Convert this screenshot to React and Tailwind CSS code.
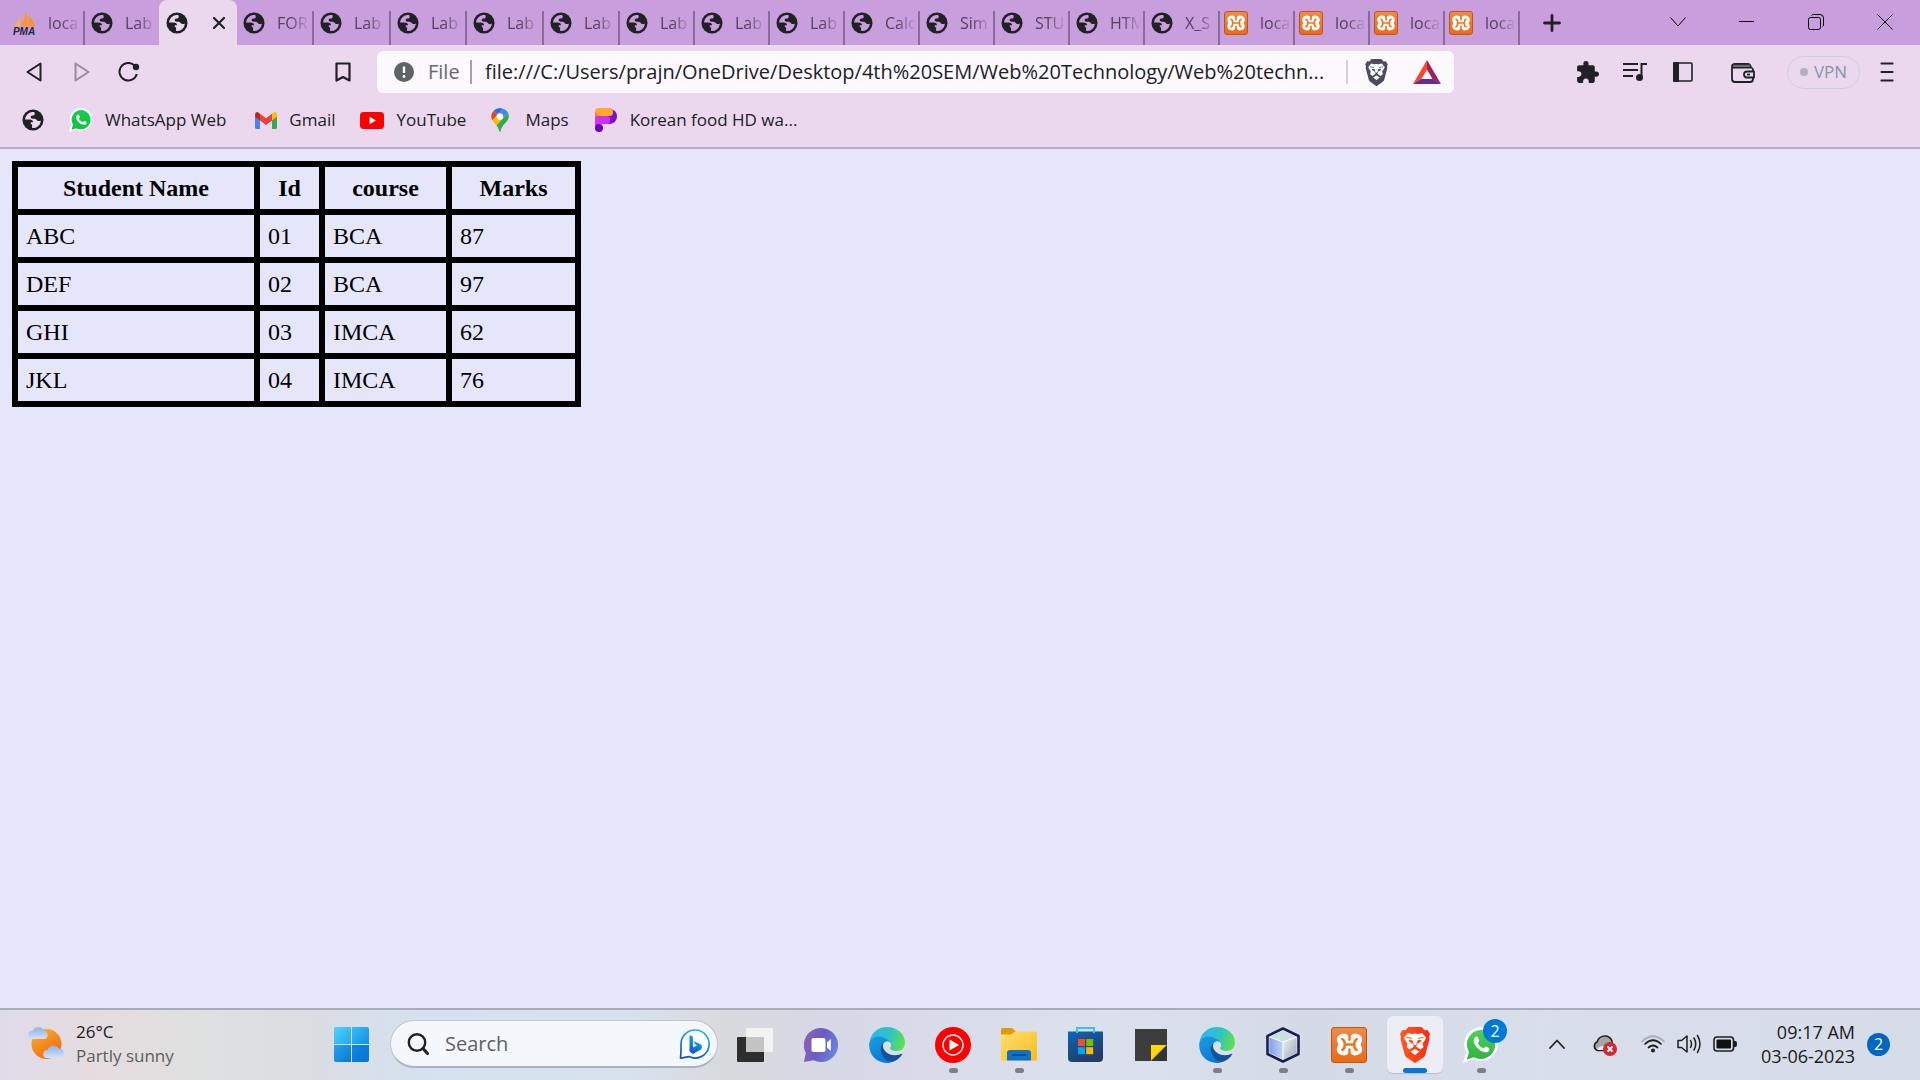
import React from "react";
import { MdExtension } from "react-icons/md";

const UI = "font-['Open_Sans','Noto_Sans',sans-serif]";

function Globe({ className, land = "#ebd8ef" }) {
  return (
    <svg viewBox="0 0 24 24" className={className} aria-hidden="true">
      <circle cx="12" cy="12" r="11.5" fill="#202124" />
      <path
        fill={land}
        d="M11 3.3A8.8 8.8 0 0 0 3.3 11.4H8.2C10.8 11.4 12 12.6 12 14.4H9.6V16.6H11V20.7A8.8 8.8 0 0 0 20.7 12.6C19.5 13.4 17.4 13.6 16.3 12.2C15.4 11 14.4 10.4 12.4 10.6C10.3 10.8 9 9.6 9.6 8C10 7 11.4 7 12.6 7C14 7 14.2 5 13.4 3.3Z"
      />
    </svg>
  );
}

function Pma({ className }) {
  return (
    <svg viewBox="0 0 24 24" className={className} aria-hidden="true">
      <path d="M2 15.5C5 12 6.8 8 7 4C8.2 8 8.2 12 7.6 15.5Z" fill="#f9b04a" />
      <path d="M8.4 15.5C11 11 13.3 6 13.5 0C15.8 6 16.3 11 15.5 15.5Z" fill="#fb9a1e" />
      <path d="M16.4 15.5C17 11 17.2 8 16.8 3.5C19.5 7 22 11 23 15.5Z" fill="#f8922a" />
      <text x="12" y="23.5" textAnchor="middle" fontSize="10" fontWeight="900" fontStyle="italic" fontFamily="Liberation Sans, sans-serif" fill="#1d2747">PMA</text>
    </svg>
  );
}

function Xampp({ className, inner }) {
  return (
    <span className={`${className} flex items-center justify-center rounded-[3px] border border-[#b25a1c] bg-linear-to-b from-[#f08a43] to-[#ec6a12]`}>
      <svg viewBox="0 0 24 24" className={inner} aria-hidden="true">
        <path
          d="M7.5 3C3.8 3 1.5 5 1.5 8C1.5 10 2.7 10.8 2.7 12C2.7 13.2 1.5 14 1.5 16C1.5 19 3.8 21 7.5 21C10.2 21 10.8 19 12 19C13.2 19 13.8 21 16.5 21C20.2 21 22.5 19 22.5 16C22.5 14 21.3 13.2 21.3 12C21.3 10.8 22.5 10 22.5 8C22.5 5 20.2 3 16.5 3C13.8 3 13.2 5 12 5C10.8 5 10.2 3 7.5 3Z"
          fill="#fff"
        />
        <path
          d="M6 7.5Q8.3 8.5 8 12Q8.3 15.500 6 16.500M18 7.500Q15.700 8.500 16 12Q15.700 15.500 18 16.500M8 12H16M12 4.500V8M12 16V19.500"
          fill="none"
          stroke="#ee7420"
          strokeWidth="2"
          strokeLinecap="round"
          strokeLinejoin="round"
        />
      </svg>
    </span>
  );
}

function WhatsApp({ className, from, to }) {
  return (
    <svg viewBox="0 0 36 36" className={className} aria-hidden="true">
      <path d="M18.5 0A17 17 0 1 1 10.5 32.2L0 36L3.3 25A17 17 0 0 1 18.5 0Z" fill="#fff" />
      <defs>
        <linearGradient id={`wa${from}`} x1="0" y1="0" x2="0" y2="1">
          <stop offset="0" stopColor={`#${from}`} />
          <stop offset="1" stopColor={`#${to}`} />
        </linearGradient>
      </defs>
      <path d="M18.5 3A14.5 14.5 0 1 1 11 30.3L3.8 32.5L6 25A14.5 14.5 0 0 1 18.5 3Z" fill={`url(#wa${from})`} />
      <path d="M13.5 9.6C14.3 9.5 14.7 9.9 15 10.6L16.2 13.5C16.4 14.3 15.2 15.2 14.7 15.9C16 18.4 18 20.2 20.6 21.3C21.5 20.6 22.2 19.2 23 19.6L26 21.1C26.8 21.6 26.5 23 25.8 23.9C24.5 25.4 22.3 25.6 20.5 24.9C16 23.3 12.7 20 11 16C10.2 13.6 11 10.3 13.5 9.6Z" fill="#fff" />
    </svg>
  );
}

function Edge({ className, id }) {
  return (
    <svg viewBox="0 0 36 36" className={className} aria-hidden="true">
      <defs>
        <linearGradient id={`${id}a`} x1="0" y1="0.3" x2="1" y2="0.5">
          <stop offset="0" stopColor="#2fb6ee" />
          <stop offset="0.55" stopColor="#2fc3c4" />
          <stop offset="1" stopColor="#5fe04a" />
        </linearGradient>
        <linearGradient id={`${id}b`} x1="0" y1="0" x2="0.5" y2="1">
          <stop offset="0" stopColor="#1b9de2" />
          <stop offset="1" stopColor="#0a78d4" />
        </linearGradient>
      </defs>
      <path d="M0.5 15C2 6 9 0 18 0C28 0 36 7 36 15.5C36 20.5 32.5 24 27.5 24C23.5 24 20.500 22.700 21 21C22.500 19.500 22.400 17.500 21.300 16C18 10.500 6 8 0.500 15Z" fill={`url(#${id}a)`} />
      <path d="M0.3 16C3 9 10 8.5 14.5 10.5C18 12 20.8 14 21.5 16C18 12.5 13 15 13 21C13 28 19 34 25 34C22.5 35.6 20 36 18 36C7 36 -1 27 0.3 16Z" fill={`url(#${id}b)`} />
      <path d="M15 15C12 18 11 22 12.5 26C15 32 20 35.5 24.5 34.6C28.5 33.3 31.5 30.5 33.3 27.3C33.5 26.5 32.8 26.2 32 26.6C25 30 15 27 14 19.5C13.8 18 14.2 16.4 15 15Z" fill="#12519b" />
      <path d="M14.3 18.5C14.5 16 17 14.2 19.300 14.500C22.300 15.200 22.600 18.500 21 20.500C20.500 22.800 24 24.300 28 24.200C30.500 24.200 32.500 23.500 33.500 22.500L33 26.500C29.500 28.300 25.500 28.600 22 27.600C17.500 26 14.500 22.500 14.300 18.500Z" fill="#dbdee9" />
    </svg>
  );
}

function Lion({ className, color }) {
  return (
    <svg viewBox="0 0 30 36" className={className} aria-hidden="true">
      <defs>
        <linearGradient id={`lion${color}`} x1="0" y1="0" x2="1" y2="0">
          <stop offset="0" stopColor={color === "orange" ? "#ff5a1f" : "#4b4d5c"} />
          <stop offset="1" stopColor={color === "orange" ? "#fb2b0d" : "#4b4d5c"} />
        </linearGradient>
      </defs>
      <path d="M8.5 0H21.5L24.5 3.2L27.5 3L30 7L29 10L29.5 12L25.5 27C25 29 24 30 22.5 31L16 35.5C15.3 36 14.7 36 14 35.5L7.5 31C6 30 5 29 4.5 27L0.5 12L1 10L0 7L2.5 3L5.5 3.2Z" fill={`url(#lion${color})`} />
      <path d="M15 6.5L18 7L22 6L26 10.5L25 13L22.5 16.5L23.5 20L20.5 22.5L17.5 20.5L16.2 19.5L17 17L20.5 15L21.5 13L17.5 13.3L17 15.500L16 18H14L13 15.500L12.500 13.300L8.500 13L9.500 15L13 17L13.800 19.500L12.500 20.500L9.500 22.500L6.500 20L7.500 16.500L5 13L4 10.500L8 6L12 7Z" fill="#fff" />
      <path d="M15 22L19.5 24.5L15 28L10.5 24.5Z" fill="#fff" />
      <path d="M6.5 10.500L12 11.300M23.500 10.500L18 11.300" stroke={color === "orange" ? "#fb4a1d" : "#4b4d5c"} strokeWidth="1" />
    </svg>
  );
}

const TABS = [
  { icon: "globe", text: "FOR", w: "w-[77px]" },
  { icon: "globe", text: "Lab", w: "w-[77px]" },
  { icon: "globe", text: "Lab", w: "w-[76px]" },
  { icon: "globe", text: "Lab", w: "w-[77px]" },
  { icon: "globe", text: "Lab", w: "w-[76px]" },
  { icon: "globe", text: "Lab", w: "w-[75px]" },
  { icon: "globe", text: "Lab", w: "w-[75px]" },
  { icon: "globe", text: "Lab", w: "w-[75px]" },
  { icon: "globe", text: "Calc", w: "w-[75px]" },
  { icon: "globe", text: "Sim", w: "w-[75px]" },
  { icon: "globe", text: "STU", w: "w-[75px]" },
  { icon: "globe", text: "HTM", w: "w-[75px]" },
  { icon: "globe", text: "X_S", w: "w-[75px]" },
  { icon: "xampp", text: "loca", w: "w-[75px]" },
  { icon: "xampp", text: "loca", w: "w-[75px]" },
  { icon: "xampp", text: "loca", w: "w-[75px]" },
  { icon: "xampp", text: "loca", w: "w-[75px]" },
];

function Tab({ icon, text, w, divider = true, first = false }) {
  return (
    <button className={`${w} flex h-full shrink-0 items-stretch pt-[11px]`}>
      <span className={`flex min-w-0 flex-1 items-center pb-2.5 pr-0.5 ${first ? "pl-3" : icon === "xampp" ? "pl-1" : "pl-1.5"}`}>
        {icon === "globe" && <Globe className="mr-3 size-[22px] shrink-0" land="#c89edc" />}
        {icon === "xampp" && <Xampp className="mr-3 size-6 shrink-0" inner="size-5" />}
        {icon === "pma" && <Pma className="mr-3 size-6 shrink-0" />}
        <span className="min-w-0 flex-1 overflow-hidden whitespace-nowrap text-left text-[16px] leading-6 text-[#54405f] [mask-image:linear-gradient(to_right,#000_40%,transparent)]">{text}</span>
      </span>
      {divider && <span className="w-0.5 bg-[#8a6a9b]" />}
    </button>
  );
}

const IconButton = ({ label, className, children }) => (
  <button aria-label={label} className={`flex shrink-0 items-center justify-center ${className}`}>
    {children}
  </button>
);

function TabStrip() {
  return (
    <div className="flex h-[45px] items-stretch bg-[#c89edc]">
      <Tab icon="pma" text="loca" w="w-[85px]" first />
      <Tab icon="globe" text="Lab" w="w-[74px]" divider={false} />
      <div className="flex w-[78px] shrink-0 items-center justify-between rounded-t-lg bg-[#ebd8ef] pl-[7px] pr-3">
        <Globe className="size-[22px]" />
        <button aria-label="Close tab">
          <svg viewBox="0 0 12 12" className="size-3" stroke="#202124" strokeWidth="2.2" strokeLinecap="round">
            <path d="M1 1L11 11M11 1L1 11" />
          </svg>
        </button>
      </div>
      {TABS.map((t, i) => (
        <Tab key={i} {...t} />
      ))}
      <IconButton label="New tab" className="ml-3.5 w-9">
        <svg viewBox="0 0 18 18" className="size-[18px]" stroke="#202124" strokeWidth="2.8" strokeLinecap="round">
          <path d="M9 1.5V16.5M1.5 9H16.5" />
        </svg>
      </IconButton>
      <div className="ml-auto flex pb-0.5">
        <IconButton label="Search tabs" className="w-[68px]">
          <svg viewBox="0 0 16 10" className="h-2.5 w-4" fill="none" stroke="#000" strokeWidth="1">
            <path d="M0.5 0.5L8 9L15.5 0.5" />
          </svg>
        </IconButton>
        <IconButton label="Minimise" className="w-[69px]">
          <span className="h-px w-[15px] bg-black" />
        </IconButton>
        <IconButton label="Restore" className="w-[69px]">
          <svg viewBox="0 0 16 16" className="size-4" fill="none" stroke="#000" strokeWidth="1">
            <rect x="0.5" y="3.5" width="12" height="12" rx="2" />
            <path d="M3.5 1.5Q4 0.5 5.5 0.5H12Q15.5 0.5 15.5 4V11Q15.5 12 14.5 12.5" />
          </svg>
        </IconButton>
        <IconButton label="Close" className="w-[70px]">
          <svg viewBox="0 0 16 16" className="size-4" stroke="#000" strokeWidth="1">
            <path d="M0.5 0.5L15.5 15.5M15.5 0.5L0.5 15.5" />
          </svg>
        </IconButton>
      </div>
    </div>
  );
}

function Toolbar() {
  return (
    <div className="flex h-[54px] items-center bg-[#ebd8ef] pr-[23px]">
      <IconButton label="Back" className="ml-6 w-5">
        <svg viewBox="0 0 16 20" className="h-5 w-4" fill="none" stroke="#202124" strokeWidth="2" strokeLinejoin="round">
          <path d="M14.5 1.5V18.5L1.5 10Z" />
        </svg>
      </IconButton>
      <IconButton label="Forward" className="ml-7 w-5">
        <svg viewBox="0 0 16 20" className="h-5 w-4" fill="none" stroke="#978a9f" strokeWidth="2" strokeLinejoin="round">
          <path d="M1.5 1.5V18.5L14.5 10Z" />
        </svg>
      </IconButton>
      <IconButton label="Reload" className="ml-[25px] w-6">
        <svg viewBox="0 0 22 20" className="h-5 w-[22px]" fill="none" stroke="#202124" strokeWidth="2">
          <path d="M16.5 3.5A8.8 8.8 0 1 0 18.8 12" />
          <circle cx="18" cy="5" r="3.2" fill="#202124" stroke="none" />
        </svg>
      </IconButton>
      <IconButton label="Bookmark this tab" className="ml-[190px] w-6">
        <svg viewBox="0 0 16 20" className="h-5 w-4" fill="none" stroke="#202124" strokeWidth="2.2" strokeLinejoin="round">
          <path d="M1.5 1.5H14.5V18.5L8 15L1.5 18.5Z" />
        </svg>
      </IconButton>
      <div className="ml-[22px] flex h-[42px] flex-1 items-center rounded-md bg-[#fcfafe] pl-[17px] pr-[13px]">
        <svg viewBox="0 0 20 20" className="size-5 shrink-0" aria-hidden="true">
          <circle cx="10" cy="10" r="10" fill="#5f6368" />
          <path d="M10 4.5V11" stroke="#fff" strokeWidth="2.4" />
          <circle cx="10" cy="14.5" r="1.4" fill="#fff" />
        </svg>
        <span className="ml-3.5 w-[42px] text-[20px] leading-7 text-[#6a6672]">File</span>
        <span className="h-6 w-0.5 bg-[#a5a1a9]" />
        <input
          aria-label="Address"
          readOnly
          value="file:///C:/Users/prajn/OneDrive/Desktop/4th%20SEM/Web%20Technology/Web%20techn..."
          className="ml-[13px] min-w-0 flex-1 bg-transparent text-[20px] leading-7 text-[#202124] outline-none"
        />
        <span className="h-6 w-0.5 bg-[#d3d1d8]" />
        <IconButton label="Brave Shields" className="ml-4 w-6">
          <Lion className="h-[27px] w-[23px]" color="grey" />
        </IconButton>
        <IconButton label="Brave Rewards" className="ml-[25px] w-7">
          <svg viewBox="0 0 28 24" className="h-6 w-7">
            <path d="M14 0L0 24L8.5 19L14 9.5Z" fill="#ff4724" />
            <path d="M14 0L28 24L19.5 19L14 9.5Z" fill="#9e1f63" />
            <path d="M0 24H28L20 19H8Z" fill="#662d91" />
          </svg>
        </IconButton>
      </div>
      <IconButton label="Extensions" className="ml-[119px] w-7">
        <MdExtension className="size-[25px] text-[#202124]" />
      </IconButton>
      <IconButton label="Media controls" className="ml-5 w-7">
        <svg viewBox="0 0 24 20" className="h-5 w-6" fill="none" stroke="#202124" strokeWidth="2">
          <path d="M0 2H15M0 8H15M0 14H10M18.5 15V2H24" />
          <circle cx="16.5" cy="15.5" r="3.5" fill="#202124" stroke="none" />
        </svg>
      </IconButton>
      <IconButton label="Sidebar" className="ml-5 w-7">
        <svg viewBox="0 0 20 20" className="size-5">
          <rect x="1" y="1" width="18" height="18" rx="1" fill="none" stroke="#202124" strokeWidth="1.6" />
          <rect x="0" y="0" width="6" height="20" rx="1" fill="#202124" />
        </svg>
      </IconButton>
      <IconButton label="Wallet" className="ml-8 w-7">
        <svg viewBox="0 0 24 20" className="mt-0.5 h-5 w-6" fill="none" stroke="#202124" strokeWidth="1.8" strokeLinejoin="round">
          <path d="M1 4V16Q1 19 4 19H19Q22 19 22 16V7Q22 5 20 4.5H2Q1 4 1 3Q1.500 1 4 1H17Q19 1 20 4.500" />
          <path d="M2 2.7H19" stroke="#6b6670" />
          <path d="M23 8.5H16Q13 8.5 13 11.5Q13 14.5 16 14.5H23Z" fill="#ebd8ef" />
          <path d="M16 11.5H19" />
        </svg>
      </IconButton>
      <button className="ml-[30px] flex h-[33px] w-[73px] shrink-0 items-center justify-center gap-1.5 rounded-full border border-[#cdd0d3] text-[17px] text-[#8a93a8]">
        <span className="size-2 rounded-full bg-[#adb2c3]" />
        VPN
      </button>
      <IconButton label="Menu" className="ml-[17px] w-5">
        <svg viewBox="0 0 14 20" className="h-5 w-3.5" stroke="#202124" strokeWidth="2.2" strokeLinecap="round">
          <path d="M1.5 1.5H12.5M1.5 10H12.5M1.5 18.5H12.5" />
        </svg>
      </IconButton>
    </div>
  );
}

const linkText = "text-[17px] leading-6 text-[#202124]";

function Bookmarks() {
  return (
    <nav className="flex h-[50px] items-center border-b-2 border-[#b9aac6] bg-[#ebd8ef] pb-1.5 pl-[22px]">
      <a href="#new" aria-label="Untitled bookmark">
        <Globe className="size-[22px]" />
      </a>
      <a href="#whatsapp" className={`ml-[25px] flex items-center gap-3 ${linkText}`}>
        <WhatsApp className="size-6" from="14cf4a" to="0fc143" />
        WhatsApp Web
      </a>
      <a href="#gmail" className={`ml-[29px] flex items-center gap-3 ${linkText}`}>
        <svg viewBox="0 0 22 17" className="h-[17px] w-[22px]" aria-hidden="true">
          <path d="M0 3V15.5Q0 17 1.5 17H5V7Z" fill="#4285f4" />
          <path d="M22 3V15.5Q22 17 20.5 17H17V7Z" fill="#34a853" />
          <path d="M5 8.5V1.8L11 6.3L17 1.8V8.5L11 13Z" fill="#ea4335" />
          <path d="M0 3Q0 0 2.5 0L5 1.8V8.5L0 4.7Z" fill="#c5221f" />
          <path d="M22 3Q22 0 19.5 0L17 1.8V8.5L22 4.7Z" fill="#fbbc04" />
        </svg>
        Gmail
      </a>
      <a href="#youtube" className={`ml-[25px] flex items-center gap-3 ${linkText}`}>
        <svg viewBox="0 0 24 17" className="h-[17px] w-6" aria-hidden="true">
          <rect width="24" height="17" rx="3.5" fill="#f00" />
          <path d="M9.6 4.8L16 8.5L9.6 12.2Z" fill="#fff" />
        </svg>
        YouTube
      </a>
      <a href="#maps" className={`ml-[25px] flex items-center gap-4 ${linkText}`}>
        <svg viewBox="0 0 18 24" className="h-6 w-[18px]" aria-hidden="true">
          <path d="M9 0A8.5 8.5 0 0 0 2.5 3L6.5 6.5L12 0.7Z" fill="#1a73e8" />
          <path d="M2.5 3A8.5 8.5 0 0 0 1.5 12.5L6.5 6.5Z" fill="#ea4335" />
          <path d="M12 0.7L6.5 6.5A3.3 3.3 0 0 1 11.5 10.5L17 4.5A8.5 8.5 0 0 0 12 0.7Z" fill="#4285f4" />
          <path d="M1.5 12.5L6.5 6.5A3.5 3.5 0 0 0 11.5 10.8L5.5 17.5Q3 15 1.5 12.5Z" fill="#fbbc04" />
          <path d="M17 4.5Q18.8 9 16.5 12.5C13 16.5 10.5 18.5 9.7 23Q9 24.7 8.3 23Q7.5 20 5.5 17.5Z" fill="#34a853" />
          <circle cx="9" cy="8.5" r="3.2" fill="#fff" />
        </svg>
        Maps
      </a>
      <a href="#wallpaper" className={`ml-[25px] flex items-center gap-3 ${linkText}`}>
        <svg viewBox="0 0 24 24" className="size-6" aria-hidden="true">
          <path d="M15 1C21 1 23 5 23 8.5C23 13 19.5 16 15 16H10V8Z" fill="#7b10cf" />
          <rect x="1" y="0" width="18" height="8" rx="3.5" fill="#ffa92e" />
          <path d="M1 4V12H6V8Z" fill="#ff7a45" />
          <rect x="1" y="8" width="15" height="8" rx="3" fill="#cf2ff0" />
          <path d="M1 11V19H6V15Z" fill="#d836e8" />
          <circle cx="5" cy="20" r="4" fill="#6a00c8" />
        </svg>
        Korean food HD wa...
      </a>
    </nav>
  );
}

const ROWS = [
  ["ABC", "01", "BCA", "87"],
  ["DEF", "02", "BCA", "97"],
  ["GHI", "03", "IMCA", "62"],
  ["JKL", "04", "IMCA", "76"],
];
const cell = "h-12 border-[6px] border-black px-2 py-0";

function Page() {
  return (
    <main className="min-h-0 flex-1 bg-[#e5e6fa] p-3 font-['Liberation_Serif','Times_New_Roman',serif] text-2xl leading-7 text-black">
      <table className="border-collapse border-[6px] border-black">
        <thead>
          <tr>
            <th className={`${cell} w-[242px]`}>Student Name</th>
            <th className={`${cell} w-[65px]`}>Id</th>
            <th className={`${cell} w-[127px]`}>course</th>
            <th className={`${cell} w-[129px]`}>Marks</th>
          </tr>
        </thead>
        <tbody>
          {ROWS.map((r) => (
            <tr key={r[0]}>
              {r.map((c) => (
                <td key={c} className={cell}>{c}</td>
              ))}
            </tr>
          ))}
        </tbody>
      </table>
    </main>
  );
}

function TaskButton({ label, running, active, children }) {
  return (
    <button aria-label={label} className="flex w-[66px] shrink-0 items-center justify-center">
      <span className={`relative flex h-[57px] w-14 items-center justify-center rounded-md ${active ? "bg-[#ecedf5] shadow-[0_1px_1px_#b9bfcd]" : ""}`}>
        {children}
        {running && <span className="absolute bottom-0 h-[5px] w-[9px] rounded-full bg-[#7d7f86]" />}
        {active && <span className="absolute bottom-0 h-[5px] w-6 rounded-full bg-[#0078d7]" />}
      </span>
    </button>
  );
}

function Taskbar() {
  return (
    <footer className="flex h-[72px] shrink-0 items-stretch border-t-2 border-[#a9adba] bg-[linear-gradient(90deg,#dedbe9_0%,#e6dcdf_5%,#dfe0e0_10%,#dadde2_16%,#d5e1ee_22%,#d7e2ee_32%,#d9dade_38%,#d8d8e5_42%,#d9dce9_50%,#dbe2ee_58%,#d4dbe7_68%,#d8deea_80%,#d6dce8_100%)] pr-[30px]">
      <button className="flex w-[325px] items-center pl-7 text-left">
        <svg viewBox="0 0 37 34" className="mb-1 h-[34px] w-[37px]" aria-hidden="true">
          <defs>
            <linearGradient id="sun" x1="0" y1="0" x2="0.6" y2="1">
              <stop offset="0" stopColor="#f6b52e" />
              <stop offset="1" stopColor="#f36a10" />
            </linearGradient>
            <linearGradient id="cloud" x1="0" y1="0" x2="0" y2="1">
              <stop offset="0" stopColor="#8fb0ea" />
              <stop offset="1" stopColor="#d3e2f8" />
            </linearGradient>
          </defs>
          <circle cx="18.5" cy="18" r="15" fill="url(#sun)" />
          <path d="M4 13A4 4 0 0 1 4.5 5A6.5 6.5 0 0 1 16 4.5A4.5 4.5 0 0 1 17 13Z" fill="url(#cloud)" />
          <path d="M19 32A4 4 0 0 1 19.5 24A6.5 6.5 0 0 1 31 22.5A4.8 4.8 0 0 1 32 32Z" fill="url(#cloud)" />
        </svg>
        <span className="ml-[11px] pb-0.5 text-[17px] leading-6">
          <span className="block text-[#1b1b1b]">26°C</span>
          <span className="block text-[#5c5c5f]">Partly sunny</span>
        </span>
      </button>
      <IconButton label="Start" className="w-[52px]">
        <span className="mb-0.5 grid size-[35px] grid-cols-2 gap-px">
          <span className="rounded-tl-xs bg-linear-to-br from-[#4fd2ff] to-[#22a8ec]" />
          <span className="rounded-tr-xs bg-linear-to-br from-[#36bdf6] to-[#1290de]" />
          <span className="rounded-bl-xs bg-linear-to-br from-[#25a5ea] to-[#0a78d4]" />
          <span className="rounded-br-xs bg-linear-to-br from-[#1189dc] to-[#0573d2]" />
        </span>
      </IconButton>
      <label className="my-[10px] ml-[13px] flex h-[48px] w-[328px] items-center self-start rounded-full border border-b-2 border-[#bcc6d4] border-b-[#aab4c0] bg-[#f4f7fb] pl-4 pr-[7px]">
        <svg viewBox="0 0 22 22" className="size-[22px] shrink-0" fill="none" stroke="#222" strokeWidth="2.4" strokeLinecap="round">
          <circle cx="10" cy="9.5" r="8.2" />
          <path d="M16 15.5L20.5 20.5" strokeWidth="3" />
        </svg>
        <input aria-label="Search" placeholder="Search" className="ml-4 min-w-0 flex-1 bg-transparent text-[20px] leading-7 outline-none placeholder:text-[#5f6064]" />
        <svg viewBox="0 0 32 32" className="size-8 shrink-0" aria-hidden="true">
          <defs>
            <linearGradient id="bing" x1="0.7" y1="0" x2="0.3" y2="1">
              <stop offset="0" stopColor="#18b9ef" />
              <stop offset="1" stopColor="#1453d0" />
            </linearGradient>
          </defs>
          <path d="M17 2A14 14 0 1 1 11 28.6L2.5 30.2L3 23L3 16A14 14 0 0 1 17 2Z" fill="#fff" stroke="url(#bing)" strokeWidth="1.7" strokeLinejoin="round" />
          <path d="M11.5 7L15 8.5V19.5L19 17.3L17 16.3L15.5 13L23 16.5Q25 19 23 21.5L15 26L11.5 23.5Z" fill="url(#bing)" />
        </svg>
      </label>
      <div className="ml-1 mt-1.5 flex items-start">
        <TaskButton label="Task view">
          <svg viewBox="0 0 36 34" className="h-[34px] w-9">
            <rect x="0" y="9" width="27" height="25" rx="1" fill="#2e2e2e" />
            <rect x="9" y="0" width="27" height="24" rx="1" fill="#f3f3f3" />
            <rect x="9" y="9" width="18" height="15" fill="#c4c4c4" />
          </svg>
        </TaskButton>
        <TaskButton label="Chat">
          <svg viewBox="0 0 34 34" className="size-[34px]">
            <defs>
              <linearGradient id="chat" x1="0" y1="0.2" x2="1" y2="0.6">
                <stop offset="0" stopColor="#8f62ad" />
                <stop offset="0.5" stopColor="#6a5cc6" />
                <stop offset="1" stopColor="#6a83e2" />
              </linearGradient>
            </defs>
            <path d="M17 0A17 17 0 1 1 9.5 32.2L0 34L1.8 25A17 17 0 0 1 17 0Z" fill="url(#chat)" />
            <rect x="7.5" y="10" width="14" height="14" rx="2" fill="#fff" />
            <path d="M23 14.5L26.8 11V23L23 19.5Z" fill="#fff" />
          </svg>
        </TaskButton>
        <TaskButton label="Edge">
          <Edge id="e1" className="size-9" />
        </TaskButton>
        <TaskButton label="YouTube Music" running>
          <svg viewBox="0 0 36 36" className="size-9">
            <circle cx="18" cy="18" r="18" fill="#f00" />
            <circle cx="18" cy="18" r="10" fill="none" stroke="#fff" strokeWidth="1.4" />
            <path d="M14.5 12.5L24 18L14.5 23.5Z" fill="#fff" />
          </svg>
        </TaskButton>
        <TaskButton label="File Explorer" running>
          <svg viewBox="0 0 36 33" className="h-[33px] w-9">
            <defs>
              <linearGradient id="folder" x1="0" y1="0" x2="1" y2="1">
                <stop offset="0" stopColor="#ffdf73" />
                <stop offset="1" stopColor="#fbbb18" />
              </linearGradient>
            </defs>
            <path d="M0 1.5Q0 0 1.5 0H11L15 3.5V8H0Z" fill="#dd9b04" />
            <path d="M0 6.5H10L14 3.5H34.5Q36 3.5 36 5V32.5H0Z" fill="url(#folder)" />
            <path d="M6 32.5V25Q6 22 9 22H27Q30 22 30 25V32.5Z" fill="#0f72c4" />
            <path d="M11 27H25" stroke="#074a86" strokeWidth="1.6" />
          </svg>
        </TaskButton>
        <TaskButton label="Microsoft Store">
          <svg viewBox="0 0 35 35" className="size-[35px]">
            <defs>
              <linearGradient id="store" x1="0" y1="0" x2="0.5" y2="1">
                <stop offset="0" stopColor="#0c68b8" />
                <stop offset="1" stopColor="#243a68" />
              </linearGradient>
            </defs>
            <path d="M0 4.5H35V31Q35 35 31 35H4Q0 35 0 31Z" fill="url(#store)" />
            <path d="M9 6V1H26V6" fill="none" stroke="#34c1f4" strokeWidth="2" />
            <path d="M10 12H17V19H10Z" fill="#f25022" />
            <path d="M18.2 12H25.2V19H18.2Z" fill="#7fba00" />
            <path d="M10 20.2H17V27.2H10Z" fill="#00a4ef" />
            <path d="M18.2 20.2H25.2V27.2H18.2Z" fill="#ffb900" />
          </svg>
        </TaskButton>
        <TaskButton label="Sticky Notes">
          <svg viewBox="0 0 32 32" className="size-8">
            <path d="M0 0H32V16L16 32H0Z" fill="#3d3d3d" />
            <path d="M16 32L32 16V32Z" fill="#333" />
            <path d="M16 31.5V16H31.5Z" fill="#ffd60a" />
          </svg>
        </TaskButton>
        <TaskButton label="Edge profile" running>
          <Edge id="e2" className="size-9" />
        </TaskButton>
        <TaskButton label="NetBeans" running>
          <svg viewBox="0 0 34 36" className="h-9 w-[34px]" strokeLinejoin="round">
            <defs>
              <linearGradient id="cubeLeft" x1="0" y1="0" x2="1" y2="0">
                <stop offset="0" stopColor="#7f9fe4" />
                <stop offset="1" stopColor="#c5d2f4" />
              </linearGradient>
              <linearGradient id="cubeRight" x1="0" y1="0" x2="1" y2="1">
                <stop offset="0" stopColor="#eef3f5" />
                <stop offset="1" stopColor="#94a7b6" />
              </linearGradient>
            </defs>
            <path d="M17 1.5L32.5 9V27L17 34.5L1.5 27V9Z" fill="#fff" stroke="#1b1f52" strokeWidth="2.6" />
            <path d="M17 3.5L30.5 9.8L17 14.5L3.5 9.8Z" fill="#c9e2dc" />
            <path d="M3.3 10.5L16.5 15.2V32.5L3.3 26Z" fill="url(#cubeLeft)" />
            <path d="M30.7 10.5L17.5 15.2V32.5L30.7 26Z" fill="url(#cubeRight)" />
          </svg>
        </TaskButton>
        <TaskButton label="XAMPP" running>
          <Xampp className="size-9" inner="size-[29px]" />
        </TaskButton>
        <TaskButton label="Brave" active>
          <Lion className="h-9 w-[30px]" color="orange" />
        </TaskButton>
        <TaskButton label="WhatsApp" running>
          <WhatsApp className="size-9" from="4fce5d" to="2fb540" />
          <span className="absolute right-0.5 top-[3px] flex size-6 items-center justify-center rounded-full bg-[#0078d7] text-base leading-6 text-white">2</span>
        </TaskButton>
      </div>
      <div className="ml-auto flex items-center pb-0.5">
        <IconButton label="Show hidden icons" className="w-5">
          <svg viewBox="0 0 16 10" className="h-2.5 w-4" fill="none" stroke="#222" strokeWidth="1.8" strokeLinecap="round" strokeLinejoin="round">
            <path d="M1 9L8 1.5L15 9" />
          </svg>
        </IconButton>
        <IconButton label="OneDrive" className="ml-[26px] w-6">
          <svg viewBox="0 0 24 21" className="mt-0.5 h-[21px] w-6">
            <path d="M6 15.5H5A4.5 4.5 0 0 1 4 7Q6 1 12 1Q17 1 19 6V15.5Z" fill="#a5a6aa" stroke="#1e1e1e" strokeWidth="1.6" />
            <path d="M4 14Q8 9 14 12L12 15H5Z" fill="#f0e9ea" />
            <circle cx="17" cy="14" r="7" fill="#d9252c" />
            <path d="M14.5 11.5L19.5 16.5M19.5 11.5L14.5 16.5" stroke="#fff" strokeWidth="1.8" />
          </svg>
        </IconButton>
        <IconButton label="Network, volume and battery" className="ml-6 gap-3">
          <svg viewBox="0 0 24 18" className="h-[18px] w-6" fill="none" stroke="#1e1e1e" strokeWidth="1.7" strokeLinecap="round">
            <path d="M1 6.5Q12 -4 23 6.5" stroke="#a9adb6" />
            <path d="M4 9Q12 1.5 20 9M7.5 12.5Q12 8.5 16.5 12.5" />
            <circle cx="12" cy="15.5" r="2" fill="#1e1e1e" stroke="none" />
          </svg>
          <svg viewBox="0 0 24 20" className="h-5 w-6" fill="none" stroke="#1e1e1e" strokeWidth="1.5" strokeLinecap="round" strokeLinejoin="round">
            <path d="M1 6.5H4.5L10 2V18L4.5 13.5H1ZM13.5 6.5Q15.5 10 13.5 13.5M17 4Q20.5 10 17 16M20.5 1.5Q25.5 10 20.5 18.5" />
          </svg>
          <svg viewBox="0 0 24 16" className="h-4 w-6">
            <rect x="1" y="1" width="19.5" height="14" rx="3" fill="none" stroke="#1e1e1e" strokeWidth="1.6" />
            <rect x="3.5" y="3.5" width="14.5" height="9" rx="1" fill="#111" />
            <path d="M21 5H22.5Q24 5 24 8Q24 11 22.5 11H21Z" fill="#1e1e1e" />
          </svg>
        </IconButton>
        <button className="ml-6 flex items-center gap-3 text-right text-[18px] leading-6 text-[#1b1b1b]">
          <span>
            <span className="block">09:17 AM</span>
            <span className="block">03-06-2023</span>
          </span>
          <span className="flex size-[23px] items-center justify-center rounded-full bg-[#0067c0] text-base leading-6 text-white">2</span>
        </button>
      </div>
    </footer>
  );
}

export default function App() {
  return (
    <div className={`flex h-screen flex-col overflow-hidden ${UI}`}>
      <header className="shrink-0">
        <TabStrip />
        <Toolbar />
        <Bookmarks />
      </header>
      <Page />
      <Taskbar />
    </div>
  );
}
